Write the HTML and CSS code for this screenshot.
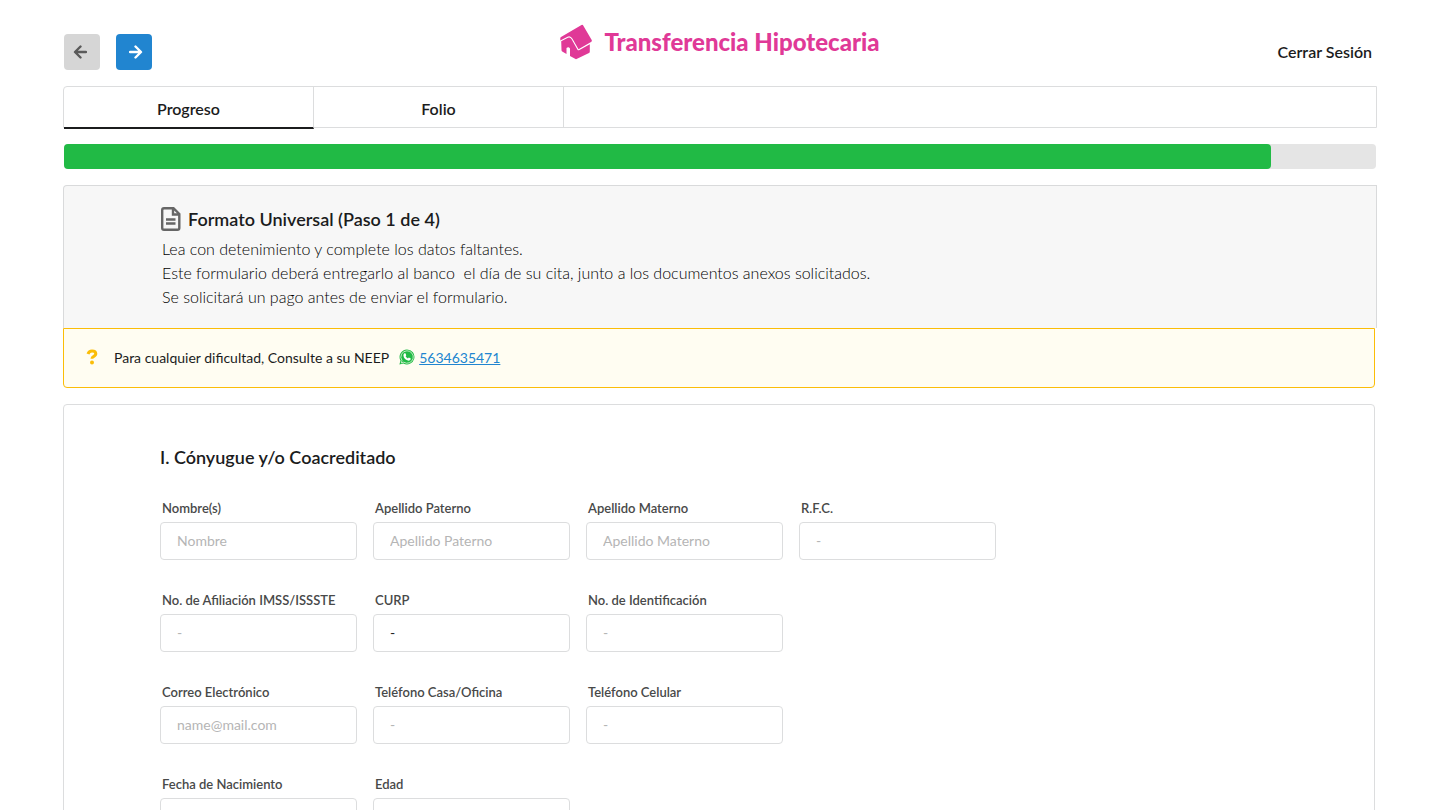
FILE: index.html
```html
<!DOCTYPE html>
<html lang="es">
<head>
    <meta charset="UTF-8">
    <meta name="viewport" content="width=device-width, initial-scale=1.0">
    <title>Transferencia Hipotecaria</title>
    <link rel="stylesheet" href="styles.css">
</head>
<body>
    <header class="header">
        <div class="nav-buttons">
            <button type="button" class="btn btn-back" aria-label="Anterior">
                <svg viewBox="0 0 14 14" width="14" height="14"><path d="M7.500 1.500L2 7l5.500 5.500M2.500 7H13"/></svg>
            </button>
            <button type="button" class="btn btn-next" aria-label="Siguiente">
                <svg viewBox="0 0 14 14" width="14" height="14"><path d="M6.500 1.500L12 7l-5.500 5.500M11.500 7H1"/></svg>
            </button>
        </div>
        <div class="brand">
            <svg class="brand-logo" viewBox="0 0 32 36" width="32" height="36">
                <path d="M21.500 1Q22.500 .3 23.200 1.500L31.700 16Q32.200 17.300 31 18L18.500 25.300L12.500 14.800Q10.500 11.300 7.500 12.700L0.300 16.500V14.300Q0.300 13.500 1 13Z"/>
                <path d="M1.200 17.300L8 13.700Q10.200 12.700 11.600 15.200L17.500 25.700Q18.200 26.800 19.500 26L29.800 20.300V27.500Q29.800 28.500 29 29L16 35.200L10 32V24.500Q8.500 22.300 6.500 24V30L2.200 27.500Q1.500 27 1.500 26Z"/>
            </svg>
            <h1>Transferencia Hipotecaria</h1>
        </div>
        <a href="#" class="logout">Cerrar Sesión</a>
    </header>

    <main class="content">
        <nav class="tabs">
            <a href="#" class="tab active">Progreso</a>
            <a href="#" class="tab">Folio</a>
        </nav>

        <div class="progress">
            <div class="progress-bar" style="width: 92%"></div>
        </div>

        <section class="intro">
            <h2>
                <svg viewBox="0 0 20 24" width="20" height="24">
                    <path d="M3 1.200H12.500L18.300 7V21Q18.300 22.800 16.500 22.800H3Q1.200 22.800 1.200 21V3Q1.200 1.200 3 1.200ZM12 1.500V7.500H18M5 12.500H14.500M5 16.500H14.500"/>
                </svg>
                Formato Universal (Paso 1 de 4)
            </h2>
            <p>Lea con detenimiento y complete los datos faltantes.<br>
            Este formulario deberá entregarlo al banco&nbsp; el día de su cita, junto a los documentos anexos solicitados.<br>
            Se solicitará un pago antes de enviar el formulario.</p>
        </section>

        <div class="message">
            <svg class="icon-help" viewBox="0 0 12 16" width="12" height="16">
                <path class="hook" d="M2 5Q3 2 6 2Q9.800 2 9.800 4.800Q9.800 6.500 7.500 7.500Q6 8.200 6 9.700"/>
                <circle cx="6" cy="13.500" r="2"/>
            </svg>
            <span>Para cualquier dificultad, Consulte a su NEEP</span>
            <a href="#" class="phone">
                <svg viewBox="0 0 16 16" width="16" height="16">
                    <path fill="#21ba45" d="M8 .4a7.500 7.500 0 1 1-3.600 14.100L.4 15.600l1.100-4A7.500 7.500 0 0 1 8 .4Z"/>
                    <path fill="none" stroke="#fffdf2" stroke-width=".7" d="M8 1.800a6.200 6.200 0 1 1-3.300 11.400l-2.400.7.700-2.300A6.200 6.200 0 0 1 8 1.800Z"/>
                    <path fill="#fff" d="M5.500 4.300h.9l.9 2-.7 1q.8 1.500 2.300 2.200l.9-.9 2 .9q.1 2-2.100 2.200Q5 10.600 4.400 6.400q.1-1.500 1.100-2.100Z"/>
                </svg>
                <span>5634635471</span>
            </a>
        </div>

        <form class="card">
            <h3>I. Cónyugue y/o Coacreditado</h3>
            <div class="row">
                <div class="field">
                    <label for="nombre">Nombre(s)</label>
                    <input type="text" id="nombre" placeholder="Nombre">
                </div>
                <div class="field">
                    <label for="paterno">Apellido Paterno</label>
                    <input type="text" id="paterno" placeholder="Apellido Paterno">
                </div>
                <div class="field">
                    <label for="materno">Apellido Materno</label>
                    <input type="text" id="materno" placeholder="Apellido Materno">
                </div>
                <div class="field">
                    <label for="rfc">R.F.C.</label>
                    <input type="text" id="rfc" placeholder="-">
                </div>
            </div>
            <div class="row">
                <div class="field">
                    <label for="afiliacion">No. de Afiliación IMSS/ISSSTE</label>
                    <input type="text" id="afiliacion" placeholder="-">
                </div>
                <div class="field">
                    <label for="curp">CURP</label>
                    <input type="text" id="curp" value="-">
                </div>
                <div class="field">
                    <label for="identificacion">No. de Identificación</label>
                    <input type="text" id="identificacion" placeholder="-">
                </div>
            </div>
            <div class="row">
                <div class="field">
                    <label for="correo">Correo Electrónico</label>
                    <input type="email" id="correo" placeholder="name@mail.com">
                </div>
                <div class="field">
                    <label for="telcasa">Teléfono Casa/Oficina</label>
                    <input type="tel" id="telcasa" placeholder="-">
                </div>
                <div class="field">
                    <label for="celular">Teléfono Celular</label>
                    <input type="tel" id="celular" placeholder="-">
                </div>
            </div>
            <div class="row">
                <div class="field">
                    <label for="nacimiento">Fecha de Nacimiento</label>
                    <input type="text" id="nacimiento">
                </div>
                <div class="field">
                    <label for="edad">Edad</label>
                    <input type="text" id="edad">
                </div>
            </div>
        </form>
    </main>
</body>
</html>
```
FILE: styles.css
```css
* {
    margin: 0;
    padding: 0;
    box-sizing: border-box;
}

html {
    scrollbar-width: none;
}

body {
    font-family: Lato, 'Helvetica Neue', Arial, sans-serif;
    font-size: 14px;
    color: #1b1c1d;
    background: #fff;
    padding: 0 64px;
}

.header {
    display: grid;
    grid-template-columns: 1fr auto 1fr;
    align-items: end;
    min-height: 86px;
    padding: 24px 0 16px;
}

.nav-buttons {
    display: flex;
    gap: 16px;
}

.btn {
    display: flex;
    align-items: center;
    width: 36px;
    height: 36px;
    padding: 0 9px;
    border: none;
    border-radius: 4px;
    cursor: pointer;
}

.btn svg {
    fill: none;
    stroke: currentColor;
    stroke-width: 2.4;
    stroke-linecap: round;
    stroke-linejoin: round;
}

.btn-back {
    background: #d6d6d6;
    color: #5a5a5a;
}

.btn-next {
    justify-content: flex-end;
    background: #2185d0;
    color: #fff;
}

.brand {
    display: flex;
    align-self: start;
    align-items: center;
    gap: 12px;
    color: #e03997;
}

.brand-logo {
    fill: currentColor;
}

.brand h1 {
    font-size: 24px;
    font-weight: 900;
    line-height: 32px;
}

.logout {
    justify-self: end;
    padding: 0 4px;
    font-size: 16px;
    font-weight: 600;
    line-height: 36px;
    color: inherit;
    text-decoration: none;
}

.tabs {
    display: flex;
    height: 42px;
    margin: 0 -1px 16px;
    border: 1px solid #dcddde;
    border-radius: 4px 0 0 0;
}

.tab {
    width: 250px;
    height: 40px;
    border-right: 1px solid #dcddde;
    font-size: 16px;
    font-weight: 600;
    line-height: 44px;
    text-align: center;
    color: inherit;
    text-decoration: none;
}

.tab.active {
    height: 42px;
    border-bottom: 2px solid #1b1c1d;
}

.progress {
    height: 25px;
    margin-bottom: 16px;
    border-radius: 4px;
    background: #e5e5e5;
}

.progress-bar {
    height: 100%;
    border-radius: 4px;
    background: #21ba45;
}

.intro {
    margin: 0 -1px;
    padding: 19px 97px;
    border: 1px solid #d9dadb;
    border-bottom: none;
    border-radius: 4px 0 0 0;
    background: #f7f7f7;
}

.intro h2 {
    display: flex;
    align-items: center;
    gap: 7px;
    font-size: 18px;
    font-weight: 600;
    line-height: 28px;
    margin-bottom: 4px;
}

.intro h2 svg {
    fill: none;
    stroke: #666;
    stroke-width: 2.4;
}

.intro p {
    padding-left: 1px;
    font-size: 16px;
    font-weight: 300;
    line-height: 24px;
    color: #000;
}

.message {
    display: flex;
    align-items: center;
    height: 60px;
    margin: 0 1px 16px -1px;
    padding: 0 22px 2px;
    border: 1px solid #fbbd08;
    border-radius: 0 0 4px 4px;
    background: #fffdf2;
}

.icon-help {
    margin-right: 16px;
    fill: #fbbd08;
}

.icon-help .hook {
    fill: none;
    stroke: #fbbd08;
    stroke-width: 3;
}

.phone {
    display: flex;
    align-items: center;
    gap: 4px;
    margin-left: 10px;
    color: #2185d0;
}

.card {
    margin: 0 1px 0 -1px;
    padding: 36px 96px;
    border: 1px solid #dcddde;
    border-radius: 4px;
}

.card h3 {
    margin-bottom: 26px;
    font-size: 18px;
    font-weight: 600;
    line-height: 32px;
}

.row {
    display: flex;
    gap: 16px;
    margin-bottom: 31px;
}

.field {
    width: 197px;
}

.field label {
    display: block;
    margin-bottom: 5px;
    padding-left: 2px;
    font-size: 13px;
    font-weight: 600;
    line-height: 18px;
    color: #484949;
}

.field input {
    width: 100%;
    height: 38px;
    padding: 0 16px 2px;
    border: 1px solid #dcddde;
    border-radius: 4px;
    background: #fff;
    font-family: inherit;
    font-size: 14px;
    color: #1b1c1d;
    outline: none;
}

.field input::placeholder {
    color: #b5b5b5;
}
```
